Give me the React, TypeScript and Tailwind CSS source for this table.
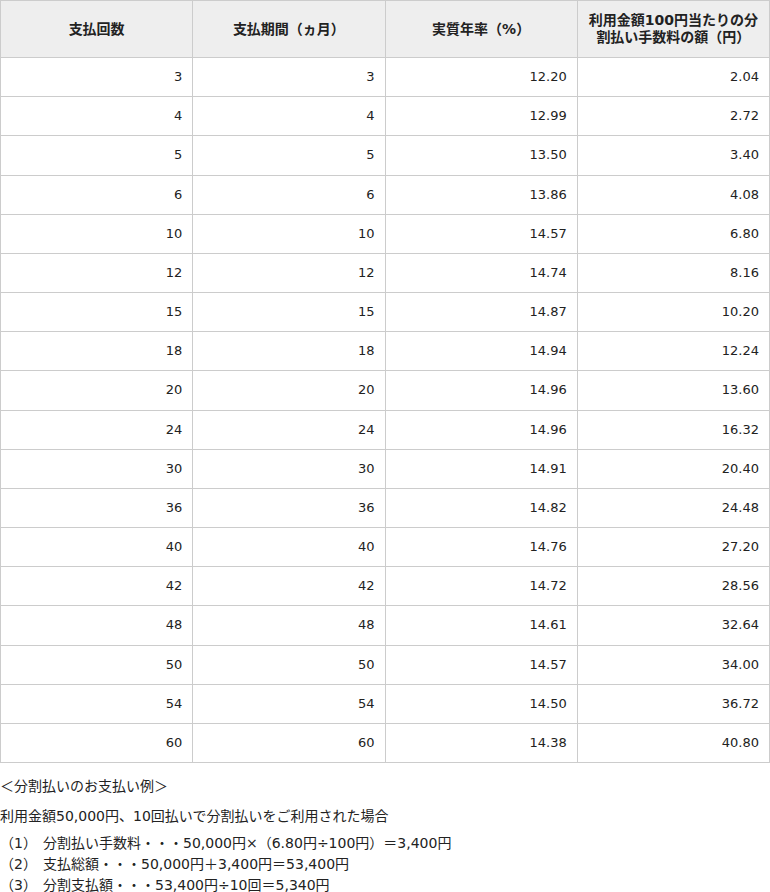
import React from 'react';

const rows: [string, string, string, string][] = [
  ['3', '3', '12.20', '2.04'],
  ['4', '4', '12.99', '2.72'],
  ['5', '5', '13.50', '3.40'],
  ['6', '6', '13.86', '4.08'],
  ['10', '10', '14.57', '6.80'],
  ['12', '12', '14.74', '8.16'],
  ['15', '15', '14.87', '10.20'],
  ['18', '18', '14.94', '12.24'],
  ['20', '20', '14.96', '13.60'],
  ['24', '24', '14.96', '16.32'],
  ['30', '30', '14.91', '20.40'],
  ['36', '36', '14.82', '24.48'],
  ['40', '40', '14.76', '27.20'],
  ['42', '42', '14.72', '28.56'],
  ['48', '48', '14.61', '32.64'],
  ['50', '50', '14.57', '34.00'],
  ['54', '54', '14.50', '36.72'],
  ['60', '60', '14.38', '40.80'],
];

const examples = [
  ['（1）', '分割払い手数料・・・50,000円×（6.80円÷100円）＝3,400円'],
  ['（2）', '支払総額・・・50,000円＋3,400円＝53,400円'],
  ['（3）', '分割支払額・・・53,400円÷10回＝5,340円'],
];

export default function App() {
  return (
    <div className="w-[770px] bg-white text-[#222] font-['DejaVu_Sans','Noto_Sans_CJK_JP',sans-serif]">
      {/* 手数料テーブル */}
      <table className="w-full table-fixed border-collapse text-[13px]">
        <thead>
          <tr className="bg-[#eeeeee]">
            {['支払回数', '支払期間（ヵ月）', '実質年率（%）', '利用金額100円当たりの分割払い手数料の額（円）'].map((h) => (
              <th key={h} className="w-1/4 border border-[#cccccc] px-[10px] py-[11px] text-[14px] leading-[17px] font-bold text-center">
                {h}
              </th>
            ))}
          </tr>
        </thead>
        <tbody>
          {rows.map((r) => (
            <tr key={r[0]}>
              {r.map((v, i) => (
                <td key={i} className="border border-[#cccccc] px-[10px] py-[10px] leading-[18.17px] text-right">
                  {v}
                </td>
              ))}
            </tr>
          ))}
        </tbody>
      </table>

      {/* お支払い例 */}
      <div className="text-[14px] leading-[21px]">
        <p className="mt-[13px]">＜分割払いのお支払い例＞</p>
        <p className="mt-[9px]">利用金額50,000円、10回払いで分割払いをご利用された場合</p>
        <ul className="mt-[6px]">
          {examples.map(([n, t]) => (
            <li key={n} className="flex">
              <span className="w-[43px] shrink-0">{n}</span>
              <span>{t}</span>
            </li>
          ))}
        </ul>
      </div>
    </div>
  );
}
